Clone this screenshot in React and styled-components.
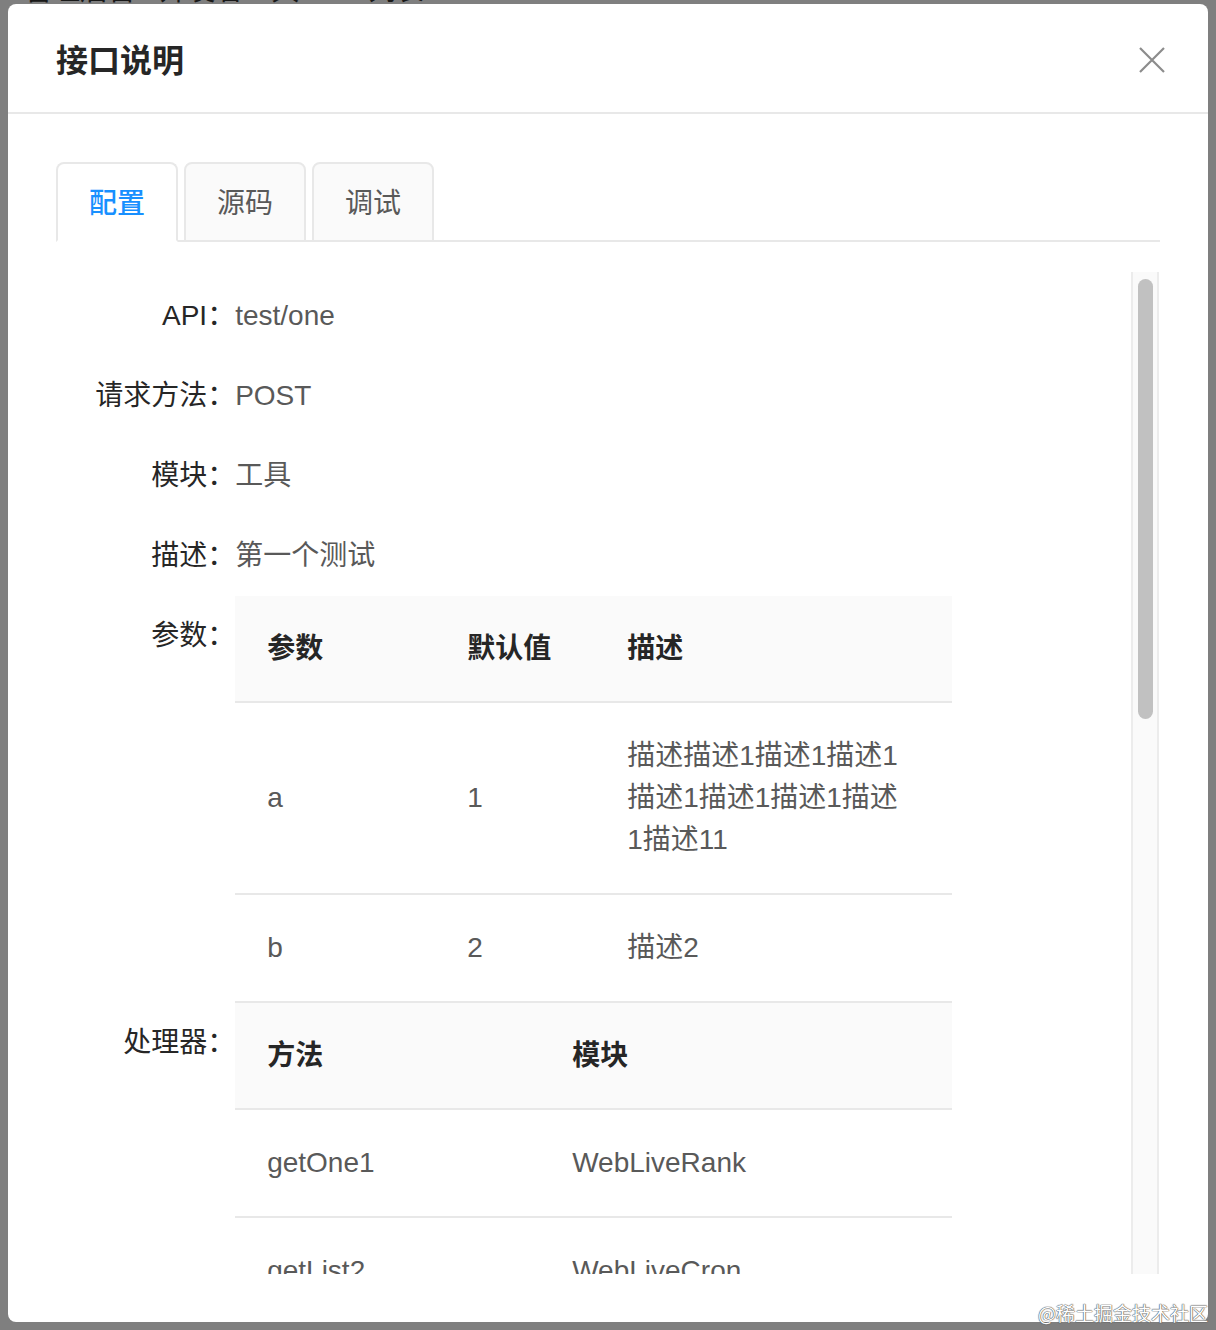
import React from 'react';
import styled, { createGlobalStyle } from 'styled-components';

const GlobalStyle = createGlobalStyle`
  html, body {
    margin: 0;
    padding: 0;
  }
  body {
    font-family: "Liberation Sans", "Noto Sans CJK SC", sans-serif;
    background: #fff;
  }
  * {
    box-sizing: border-box;
  }
`;

const Screen = styled.div`
  position: relative;
  width: 1216px;
  height: 1330px;
  overflow: hidden;
`;

const Breadcrumb = styled.div`
  margin-top: -28px;
  padding-left: 24px;
  font-size: 28px;
  line-height: 38px;
  color: #333;
  white-space: nowrap;
`;

const Mask = styled.div`
  position: absolute;
  inset: 0;
  background: rgba(0, 0, 0, 0.5);
`;

const ModalWrap = styled.div`
  position: absolute;
  inset: 0;
  padding: 4px 8px 8px;
  display: flex;
`;

const Modal = styled.div`
  flex: 1;
  display: flex;
  flex-direction: column;
  background: #fff;
  border-radius: 8px;
  overflow: hidden;
`;

const Header = styled.div`
  display: flex;
  align-items: center;
  height: 110px;
  padding-left: 48px;
  border-bottom: 2px solid #e8e8e8;
`;

const Title = styled.div`
  flex: 1;
  font-size: 32px;
  font-weight: 600;
  color: #262626;
`;

const CloseButton = styled.button`
  width: 112px;
  height: 108px;
  padding: 4px 0 0;
  border: none;
  background: transparent;
  display: flex;
  align-items: center;
  justify-content: center;
  cursor: pointer;
`;

const Body = styled.div`
  flex: 1;
  min-height: 0;
  display: flex;
  flex-direction: column;
  padding: 48px;
`;

const TabBar = styled.div`
  display: flex;
  gap: 6px;
  border-bottom: 2px solid #e8e8e8;
  margin-bottom: 30px;
`;

const Tab = styled.div`
  height: 80px;
  margin-bottom: -2px;
  padding: 0 31px;
  line-height: 79px;
  font-size: 28px;
  font-weight: ${p => (p.$active ? 500 : 400)};
  color: ${p => (p.$active ? '#1890ff' : '#595959')};
  background: ${p => (p.$active ? '#fff' : '#fafafa')};
  border: 2px solid #e8e8e8;
  border-bottom-color: ${p => (p.$active ? '#fff' : '#e8e8e8')};
  border-radius: 8px 8px 0 0;
`;

const ScrollArea = styled.div`
  flex: 1;
  min-height: 0;
  display: flex;
`;

const ScrollContent = styled.div`
  flex: 1;
  min-width: 0;
  overflow: hidden;
`;

const ScrollTrack = styled.div`
  flex: none;
  width: 28px;
  margin-right: 1px;
  padding: 7px 4px 0 5px;
  background: #fafafa;
  border-left: 2px solid #ececec;
  border-right: 2px solid #ececec;
`;

const ScrollThumb = styled.div`
  height: 440px;
  border-radius: 8px;
  background: #c1c1c1;
`;

const Form = styled.div`
  padding-top: 4px;
`;

const FormItem = styled.div`
  display: flex;
  align-items: flex-start;
`;

const Label = styled.div`
  flex: none;
  width: 16.6667%;
  text-align: right;
  line-height: 80px;
  font-size: 28px;
  color: #262626;
  white-space: nowrap;
`;

const Value = styled.div`
  flex: none;
  width: 66.6667%;
  line-height: 80px;
  font-size: 28px;
  color: #595959;
`;

const Table = styled.table`
  width: 100%;
  border-collapse: collapse;
  table-layout: fixed;
  font-size: 28px;
  line-height: 42px;
`;

const Th = styled.th`
  width: ${p => p.$width || 'auto'};
  padding: 32px 32px 31px;
  text-align: left;
  font-weight: 600;
  color: #262626;
  background: #fafafa;
  border-bottom: 2px solid #e8e8e8;
`;

const Td = styled.td`
  padding: 32px;
  color: #595959;
  vertical-align: middle;
  border-bottom: 2px solid #e8e8e8;
`;

const Watermark = styled.div`
  position: absolute;
  right: 8px;
  bottom: 6px;
  font-family: "Noto Sans CJK SC", sans-serif;
  font-size: 19px;
  line-height: 22px;
  color: #fff;
  text-shadow: 0 0 1px #555, 0 0 1px #555, 0 0 1px #555;
`;

const CloseIcon = () => (
  <svg width="26" height="26" viewBox="0 0 26 26">
    <path d="M1 1 L25 25 M25 1 L1 25" stroke="#8c8c8c" strokeWidth="2.2" fill="none" />
  </svg>
);

const params = [
  { name: 'a', def: '1', desc: ['描述描述1描述1描述1', '描述1描述1描述1描述', '1描述11'] },
  { name: 'b', def: '2', desc: ['描述2'] },
];

const handlers = [
  { method: 'getOne1', module: 'WebLiveRank' },
  { method: 'getList2', module: 'WebLiveCron' },
  { method: 'getOne3', module: 'WebLiveRank' },
];

const info = [
  { label: 'API：', value: 'test/one' },
  { label: '请求方法：', value: 'POST' },
  { label: '模块：', value: '工具' },
  { label: '描述：', value: '第一个测试' },
];

const App = () => {
  return (
    <Screen>
      <GlobalStyle />
      <Breadcrumb>管理后台 / 开发者工具 / API列表</Breadcrumb>
      <Mask />
      <ModalWrap>
        <Modal>
          <Header>
            <Title>接口说明</Title>
            <CloseButton aria-label="close">
              <CloseIcon />
            </CloseButton>
          </Header>
          <Body>
            <TabBar>
              <Tab $active>配置</Tab>
              <Tab>源码</Tab>
              <Tab>调试</Tab>
            </TabBar>
            <ScrollArea>
              <ScrollContent>
                <Form>
                  {info.map(item => (
                    <FormItem key={item.label}>
                      <Label>{item.label}</Label>
                      <Value>{item.value}</Value>
                    </FormItem>
                  ))}
                  <FormItem>
                    <Label>参数：</Label>
                    <Value>
                      <Table>
                        <thead>
                          <tr>
                            <Th $width="200px">参数</Th>
                            <Th $width="160px">默认值</Th>
                            <Th>描述</Th>
                          </tr>
                        </thead>
                        <tbody>
                          {params.map(p => (
                            <tr key={p.name}>
                              <Td>{p.name}</Td>
                              <Td>{p.def}</Td>
                              <Td>
                                {p.desc.map((line, i) => (
                                  <React.Fragment key={i}>
                                    {i > 0 && <br />}
                                    {line}
                                  </React.Fragment>
                                ))}
                              </Td>
                            </tr>
                          ))}
                        </tbody>
                      </Table>
                    </Value>
                  </FormItem>
                  <FormItem>
                    <Label>处理器：</Label>
                    <Value>
                      <Table>
                        <thead>
                          <tr>
                            <Th $width="305px">方法</Th>
                            <Th>模块</Th>
                          </tr>
                        </thead>
                        <tbody>
                          {handlers.map(h => (
                            <tr key={h.method}>
                              <Td>{h.method}</Td>
                              <Td>{h.module}</Td>
                            </tr>
                          ))}
                        </tbody>
                      </Table>
                    </Value>
                  </FormItem>
                </Form>
              </ScrollContent>
              <ScrollTrack>
                <ScrollThumb />
              </ScrollTrack>
            </ScrollArea>
          </Body>
        </Modal>
      </ModalWrap>
      <Watermark>@稀土掘金技术社区</Watermark>
    </Screen>
  );
};

export default App;
